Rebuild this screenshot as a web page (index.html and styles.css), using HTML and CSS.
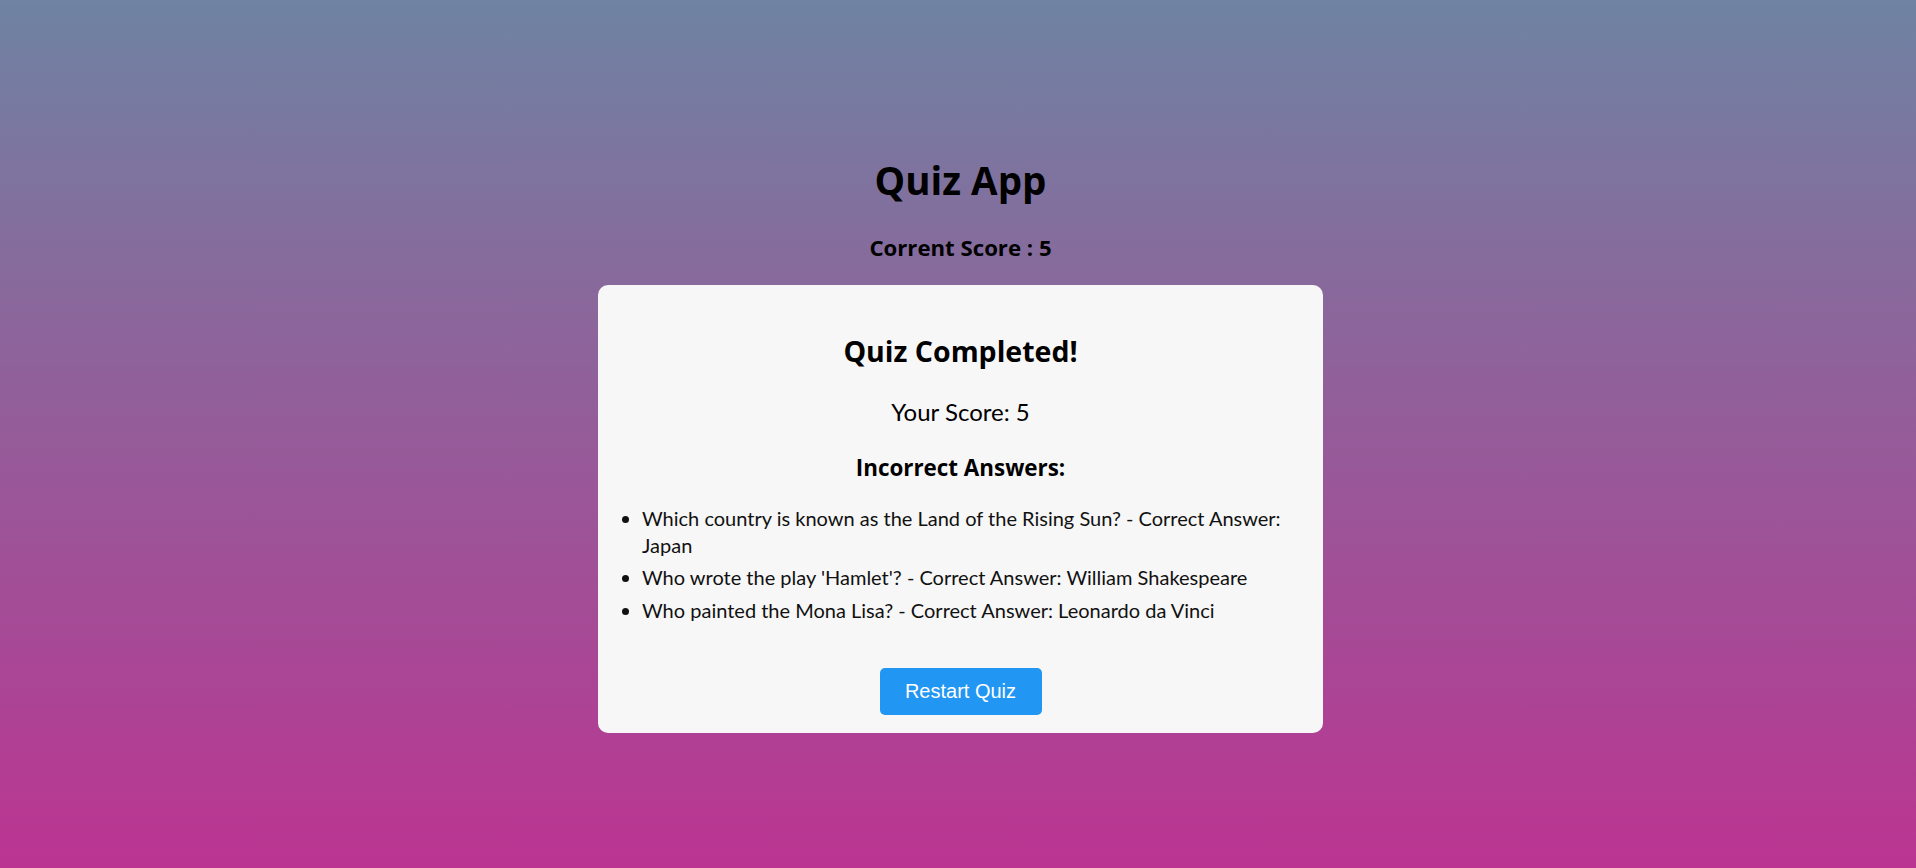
FILE: index.html
```html
<!DOCTYPE html>
<html lang="en">
<head>
<meta charset="utf-8">
<title>Quiz App</title>
<link rel="stylesheet" href="styles.css">
</head>
<body>
<div class="app">
  <h1 class="app-title">Quiz App</h1>
  <h3 class="current-score">Corrent Score : 5</h3>
  <div class="card">
    <h2 class="card-title">Quiz Completed!</h2>
    <p class="final-score">Your Score: 5</p>
    <h3 class="wrong-title">Incorrect Answers:</h3>
    <ul class="wrong-list">
      <li>Which country is known as the Land of the Rising Sun? - Correct Answer: Japan</li>
      <li>Who wrote the play 'Hamlet'? - Correct Answer: William Shakespeare</li>
      <li>Who painted the Mona Lisa? - Correct Answer: Leonardo da Vinci</li>
    </ul>
    <button class="restart-btn" type="button">Restart Quiz</button>
  </div>
</div>
</body>
</html>
```
FILE: styles.css
```css
html, body {
  margin: 0;
  padding: 0;
}

body {
  min-height: 100vh;
  background: linear-gradient(to bottom, #6f83a2 0%, #bb3491 100%);
  font-family: Lato, "Liberation Sans", sans-serif;
  font-size: 20px;
  color: #000;
}

.app {
  display: flex;
  flex-direction: column;
  align-items: center;
  padding: 156px 0 0 5px;
}

.app-title {
  margin: 0;
  font-family: "Open Sans", sans-serif;
  font-weight: 700;
  font-size: 38.5px;
  line-height: 48px;
}

.current-score {
  margin: 30px 0 0;
  font-family: "Open Sans", sans-serif;
  font-weight: 700;
  font-size: 22.2px;
  line-height: 28px;
}

.card {
  box-sizing: border-box;
  width: 725px;
  margin-top: 23px;
  padding: 20px 20px 18px;
  background: #f7f7f7;
  border-radius: 10px;
  display: flex;
  flex-direction: column;
  align-items: center;
  text-align: center;
}

.card-title {
  margin: 29px 0 0;
  font-family: "Open Sans", sans-serif;
  font-weight: 700;
  font-size: 28.5px;
  line-height: 34px;
}

.final-score {
  margin: 29px 0 0;
  font-size: 24px;
  line-height: 30px;
}

.wrong-title {
  margin: 27px 0 0;
  font-family: "Open Sans", sans-serif;
  font-weight: 700;
  font-size: 22.4px;
  line-height: 28px;
}

.wrong-list {
  align-self: stretch;
  margin: 23px 0 0;
  padding-left: 24px;
  text-align: left;
  font-size: 20px;
  line-height: 26.6px;
  color: #111;
}

.wrong-list li + li {
  margin-top: 6px;
}

.restart-btn {
  margin-top: 45px;
  width: 162px;
  height: 47px;
  padding: 0;
  border: none;
  border-radius: 5px;
  background: #2196f3;
  color: #fff;
  font-family: "Liberation Sans", Arial, sans-serif;
  font-size: 20px;
  cursor: pointer;
}
```
